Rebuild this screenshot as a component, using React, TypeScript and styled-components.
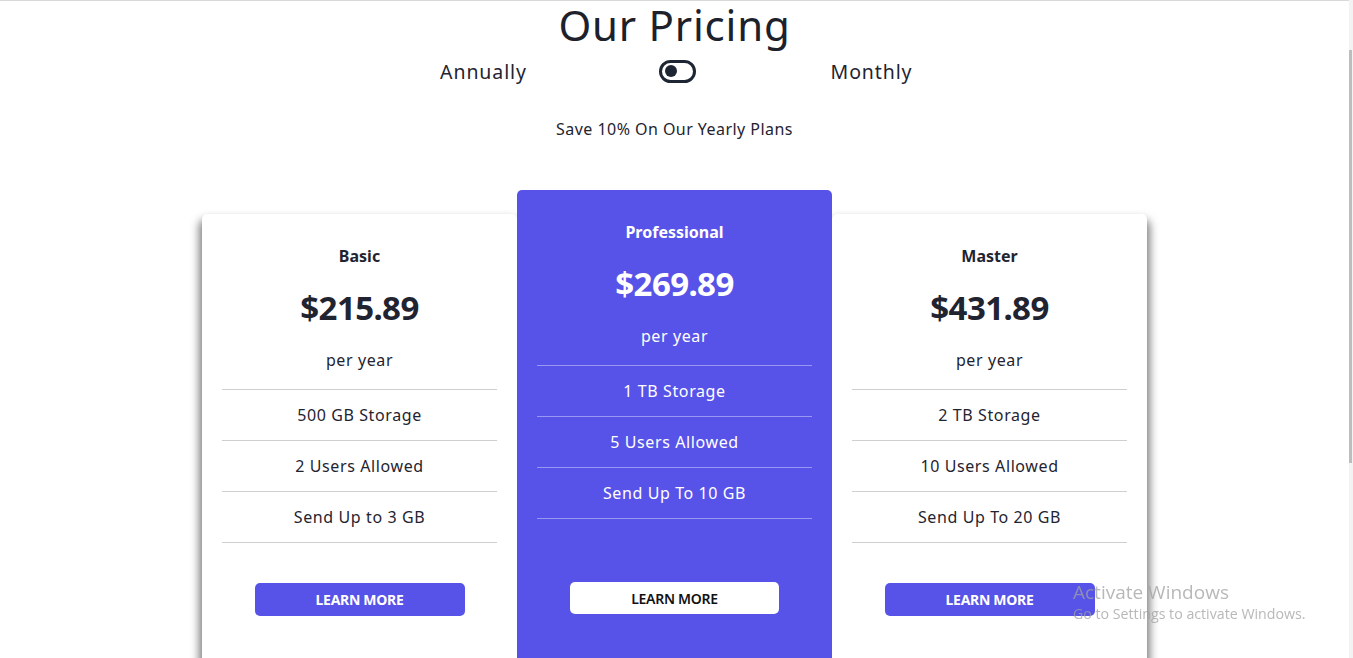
import React from "react";
import styled, { createGlobalStyle } from "styled-components";

const Global = createGlobalStyle`
  html, body { margin: 0; padding: 0; overflow: hidden; background: #fff; }
  body { font-family: "Noto Sans", "Open Sans", sans-serif; color: #1f2430; }
  * { box-sizing: border-box; }
`;

const Page = styled.div`
  border-top: 1px solid #d9d9d9;
  display: flex;
  flex-direction: column;
  align-items: center;
  width: 1349px;
  height: 658px;
  overflow: hidden;
  & > * { flex-shrink: 0; }
`;

const Title = styled.h1`
  margin: 0;
  font-size: 42px;
  font-weight: 400;
  line-height: 48px;
  letter-spacing: 0.8px;
  color: #1c212b;
`;

const ToggleRow = styled.div`
  display: grid;
  grid-template-columns: 194px 194px 194px;
  align-items: center;
  justify-items: center;
  height: 44px;
  transform: translateX(3px);
`;

const ToggleLabel = styled.span`
  font-size: 19.5px;
  letter-spacing: 0.9px;
  color: #1f2430;
`;

const Switch = styled.div`
  width: 37px;
  height: 23px;
  border: 3.5px solid #1f2633;
  border-radius: 12px;
  display: flex;
  align-items: center;
  padding-left: 3px;
`;

const Knob = styled.div`
  width: 12px;
  height: 12px;
  border-radius: 50%;
  background: #1f2633;
`;

const Save = styled.p`
  margin: 24px 0 0;
  font-size: 16px;
  line-height: 24px;
  color: #1f2430;
  letter-spacing: 0.45px;
`;

const Cards = styled.div`
  display: flex;
  align-items: flex-start;
  justify-content: center;
  margin-top: 49px;
`;

const Card = styled.div<{ $featured?: boolean }>`
  position: relative;
  width: 315px;
  height: 560px;
  border-radius: 5px;
  display: flex;
  flex-direction: column;
  align-items: center;
  padding: 30px 20px 0;
  margin-top: ${(p) => (p.$featured ? "0" : "24px")};
  background: ${(p) => (p.$featured ? "#5753e8" : "#fff")};
  color: ${(p) => (p.$featured ? "#fff" : "#1f2430")};
  z-index: ${(p) => (p.$featured ? 2 : 1)};
  box-shadow: ${(p) =>
    p.$featured ? "none" : "0 8px 9px 3px rgba(0,0,0,0.5)"};
`;

const PlanName = styled.h3`
  margin: 0;
  font-size: 16px;
  line-height: 24px;
  font-weight: 700;
`;

const Price = styled.div`
  margin-top: 18px;
  font-size: 33px;
  line-height: 44px;
  font-weight: 700;
  letter-spacing: -0.6px;
`;

const Period = styled.div`
  margin-top: 18px;
  font-size: 16px;
  line-height: 24px;
  letter-spacing: 0.6px;
`;

const Features = styled.ul<{ $featured?: boolean }>`
  list-style: none;
  margin: 17px 0 0;
  padding: 0;
  width: 100%;
  border-bottom: 1px solid ${(p) => (p.$featured ? "#9a97f2" : "#cfcfcf")};
`;

const Feature = styled.li<{ $featured?: boolean }>`
  height: 51px;
  border-top: 1px solid ${(p) => (p.$featured ? "#9a97f2" : "#cfcfcf")};
  display: flex;
  align-items: center;
  justify-content: center;
  font-size: 16px;
  letter-spacing: 0.6px;
`;

const Button = styled.button<{ $featured?: boolean }>`
  margin-top: ${(p) => (p.$featured ? "63px" : "40px")};
  width: ${(p) => (p.$featured ? "209px" : "210px")};
  height: ${(p) => (p.$featured ? "32px" : "33px")};
  border: none;
  border-radius: 5px;
  font-family: "Noto Sans", sans-serif;
  font-size: 14px;
  font-weight: ${(p) => (p.$featured ? 600 : 700)};
  letter-spacing: -0.3px;
  background: ${(p) => (p.$featured ? "#fff" : "#5753e8")};
  color: ${(p) => (p.$featured ? "#111" : "#fff")};
`;

const Track = styled.div`
  position: fixed;
  top: 0;
  right: 0;
  width: 4px;
  height: 658px;
  background: #f3f3f3;
`;

const Thumb = styled.div`
  position: fixed;
  top: 50px;
  right: 1px;
  width: 3px;
  height: 413px;
  background: #bdbdbd;
`;

const Watermark = styled.div`
  position: fixed;
  left: 1073px;
  top: 580px;
  font-family: "Open Sans", "Noto Sans", sans-serif;
  color: rgba(160, 160, 160, 0.75);
  z-index: 5;
  pointer-events: none;
`;

const WmTitle = styled.div`
  font-size: 19px;
  line-height: 24px;
`;

const WmSub = styled.div`
  font-size: 14.2px;
  line-height: 20px;
`;

const plans = [
  {
    name: "Basic",
    price: "$215.89",
    features: ["500 GB Storage", "2 Users Allowed", "Send Up to 3 GB"],
    featured: false,
  },
  {
    name: "Professional",
    price: "$269.89",
    features: ["1 TB Storage", "5 Users Allowed", "Send Up To 10 GB"],
    featured: true,
  },
  {
    name: "Master",
    price: "$431.89",
    features: ["2 TB Storage", "10 Users Allowed", "Send Up To 20 GB"],
    featured: false,
  },
];

export default function App() {
  return (
    <>
      <Global />
      <Page>
        <Title>Our Pricing</Title>
        <ToggleRow>
          <ToggleLabel>Annually</ToggleLabel>
          <Switch>
            <Knob />
          </Switch>
          <ToggleLabel>Monthly</ToggleLabel>
        </ToggleRow>
        <Save>Save 10% On Our Yearly Plans</Save>
        <Cards>
          {plans.map((p) => (
            <Card key={p.name} $featured={p.featured}>
              <PlanName>{p.name}</PlanName>
              <Price>{p.price}</Price>
              <Period>per year</Period>
              <Features $featured={p.featured}>
                {p.features.map((f) => (
                  <Feature key={f} $featured={p.featured}>
                    {f}
                  </Feature>
                ))}
              </Features>
              <Button $featured={p.featured}>LEARN MORE</Button>
            </Card>
          ))}
        </Cards>
      </Page>
      <Track />
      <Thumb />
      <Watermark>
        <WmTitle>Activate Windows</WmTitle>
        <WmSub>Go to Settings to activate Windows.</WmSub>
      </Watermark>
    </>
  );
}
